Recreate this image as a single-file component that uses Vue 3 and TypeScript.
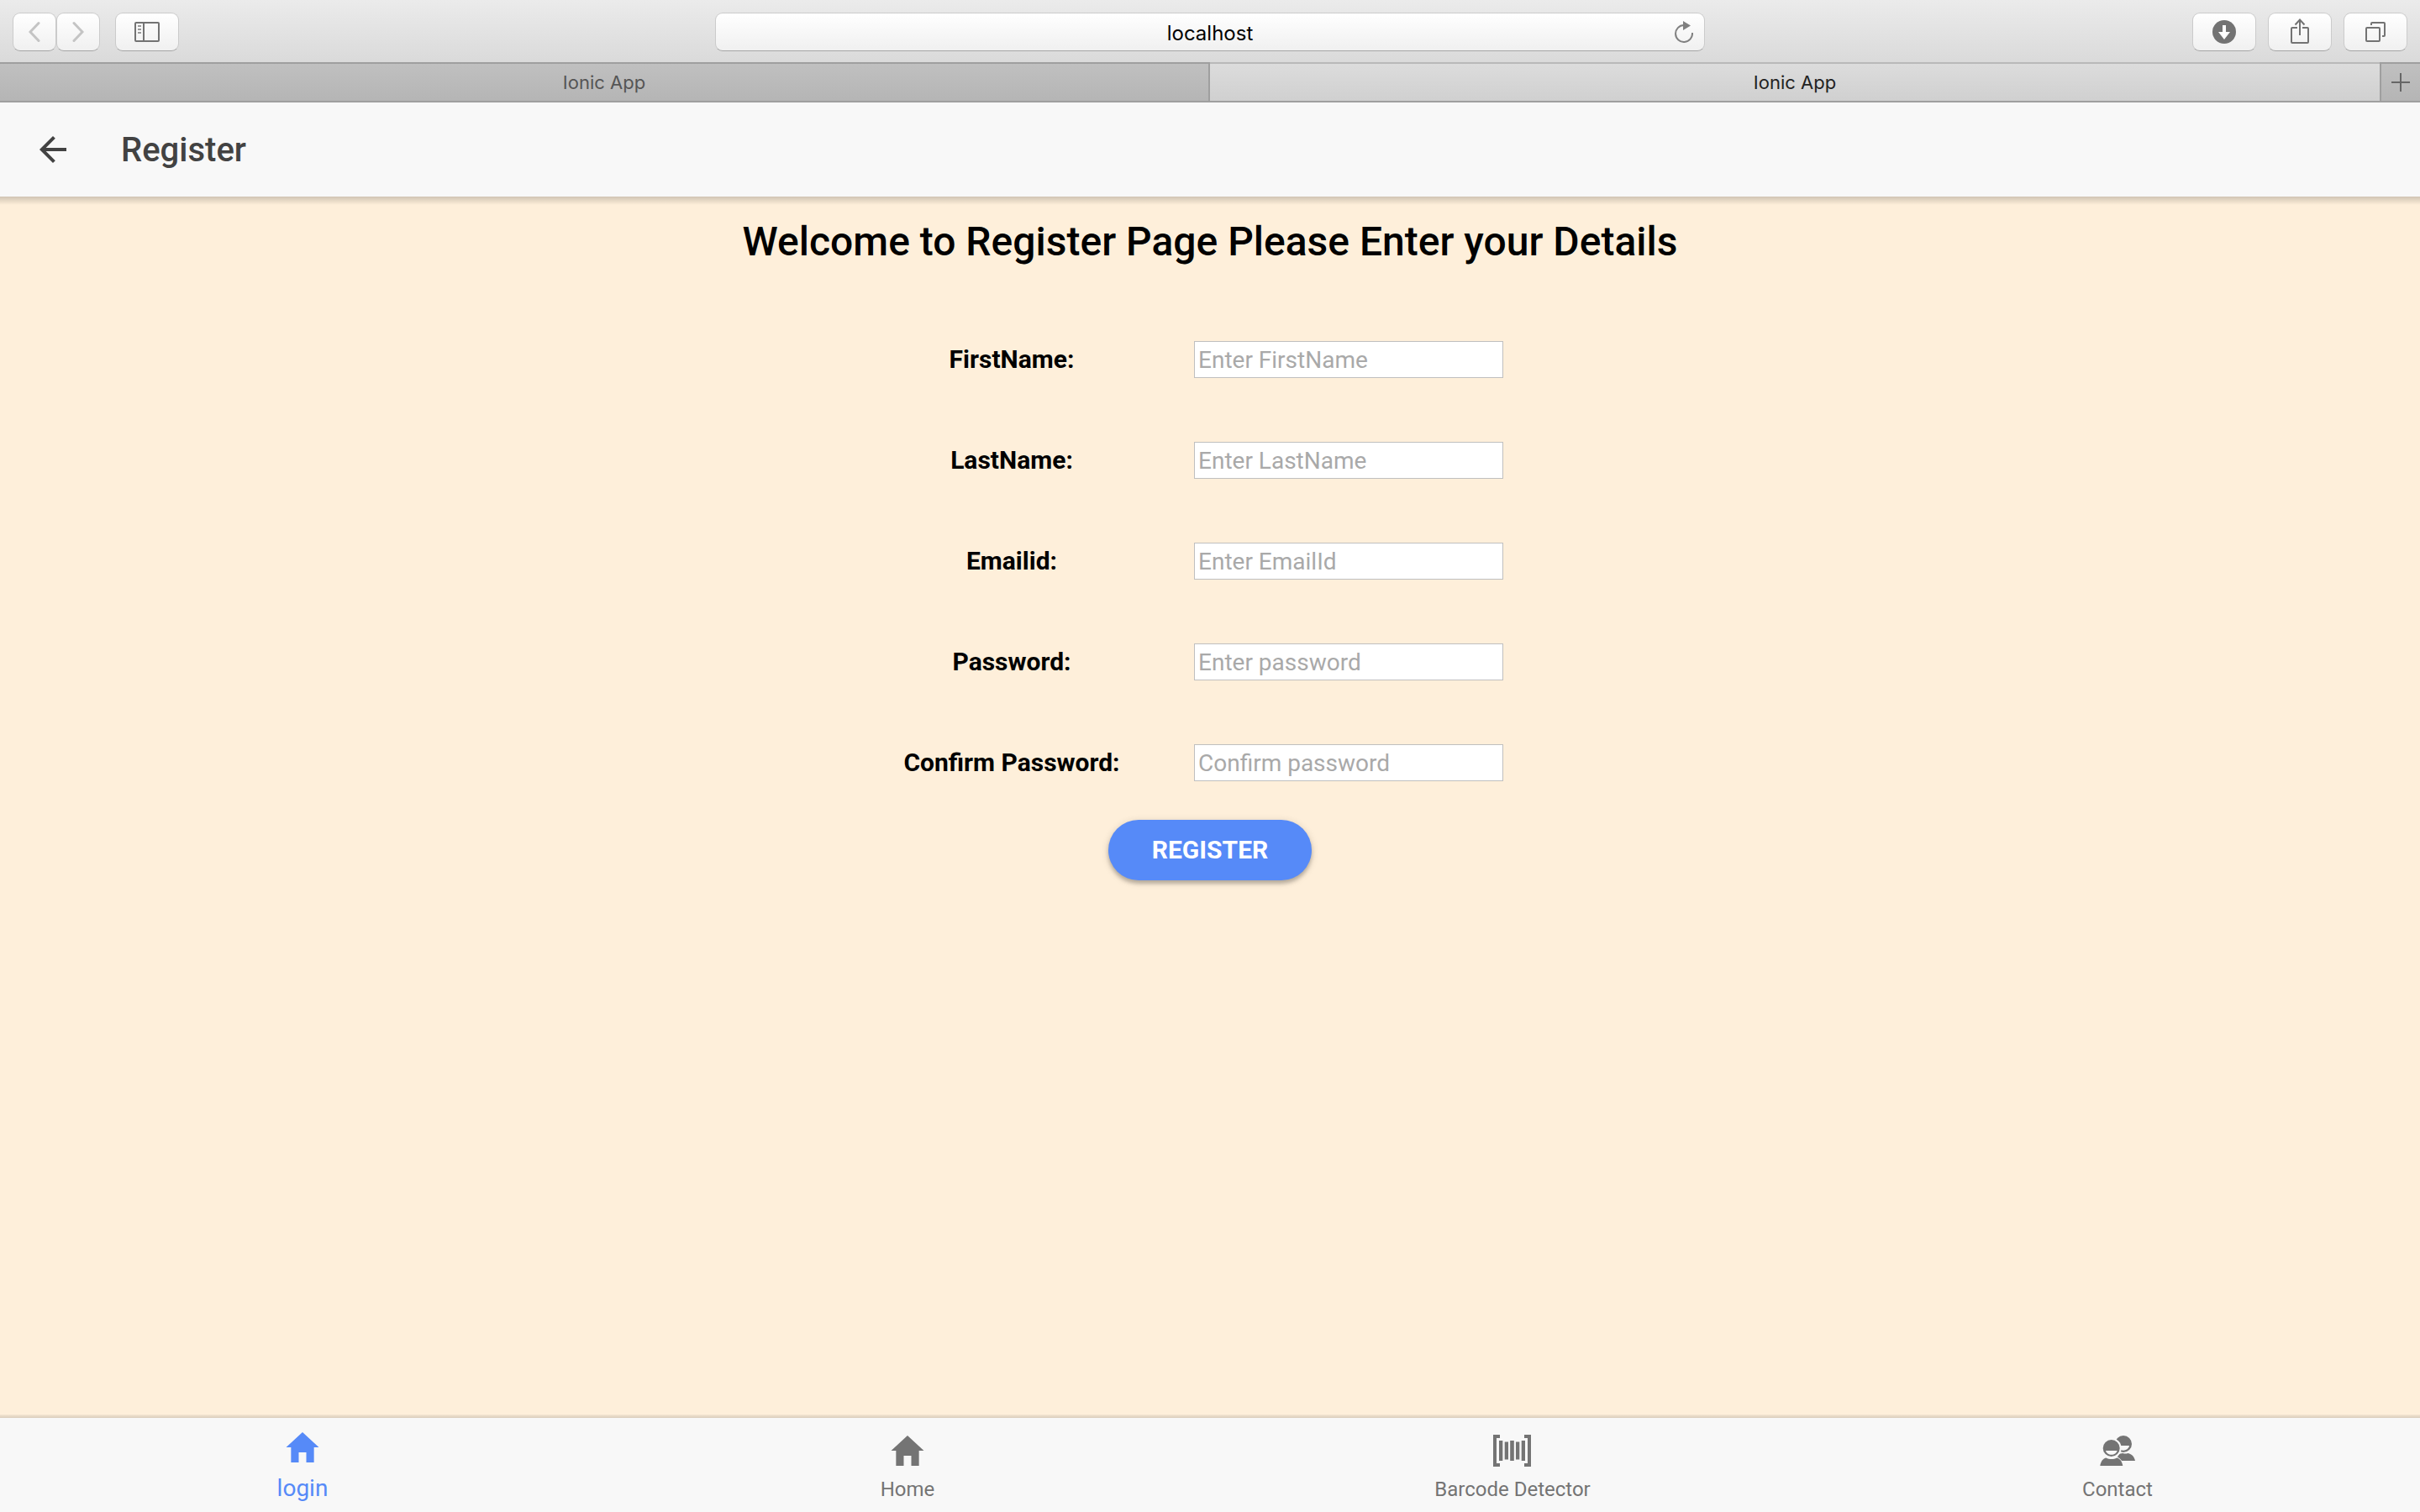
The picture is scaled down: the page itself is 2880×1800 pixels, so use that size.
<script setup lang="ts">
import { ref } from 'vue'

interface Field {
  id: string
  label: string
  placeholder: string
  type: string
}

interface Tab {
  name: string
  icon: 'home' | 'barcode' | 'contact'
}

const fields: Field[] = [
  { id: 'first-name', label: 'FirstName:', placeholder: 'Enter FirstName', type: 'text' },
  { id: 'last-name', label: 'LastName:', placeholder: 'Enter LastName', type: 'text' },
  { id: 'email-id', label: 'Emailid:', placeholder: 'Enter EmailId', type: 'email' },
  { id: 'password', label: 'Password:', placeholder: 'Enter password', type: 'password' },
  { id: 'confirm-password', label: 'Confirm Password:', placeholder: 'Confirm password', type: 'password' },
]

const tabs: Tab[] = [
  { name: 'login', icon: 'home' },
  { name: 'Home', icon: 'home' },
  { name: 'Barcode Detector', icon: 'barcode' },
  { name: 'Contact', icon: 'contact' },
]

const address = ref('localhost')
const activeTab = ref('login')
const values = ref<Record<string, string>>({})
</script>

<template>
  <div class="window">
    <div class="toolbar">
      <div class="tools">
        <div class="history">
          <button class="tool narrow" type="button" aria-label="Back">
            <svg width="14" height="26" viewBox="0 0 14 26" fill="none" stroke="#c4c4c4" stroke-width="3" stroke-linecap="round"><path d="M12 2.500L2 13l10 10.500" /></svg>
          </button>
          <button class="tool narrow" type="button" aria-label="Forward">
            <svg width="14" height="26" viewBox="0 0 14 26" fill="none" stroke="#c4c4c4" stroke-width="3" stroke-linecap="round"><path d="M2 2.500L12 13L2 23.500" /></svg>
          </button>
        </div>
        <button class="tool" type="button" aria-label="Show sidebar">
          <svg width="30" height="24" viewBox="0 0 30 24" fill="none" stroke="#737373" stroke-width="2">
            <rect x="1" y="1" width="28" height="22" rx="1" />
            <path d="M11 1v22" />
            <path d="M4 5h4M4 9h4M4 13h4" stroke="#999" />
          </svg>
        </button>
      </div>

      <div class="address">
        <input v-model="address" type="text" aria-label="Address" />
        <button class="reload" type="button" aria-label="Reload">
          <svg width="22" height="26" viewBox="0 0 22 26">
            <path d="M21 14A10 10 0 1 1 11 5" fill="none" stroke="#808080" stroke-width="2" />
            <path d="M10 0l9 5.500L10 11z" fill="#808080" />
          </svg>
        </button>
      </div>

      <div class="tools end">
        <button class="tool" type="button" aria-label="Downloads">
          <svg width="28" height="28" viewBox="0 0 28 28">
            <circle cx="14" cy="14" r="14" fill="#737373" />
            <path d="M12 6h4v8h5l-7 9-7-9h5z" fill="#fff" />
          </svg>
        </button>
        <button class="tool" type="button" aria-label="Share">
          <svg width="22" height="32" viewBox="0 0 22 32" fill="none" stroke="#737373" stroke-width="2">
            <path d="M8 11H2a1 1 0 0 0-1 1v16a1 1 0 0 0 1 1h18a1 1 0 0 0 1-1V12a1 1 0 0 0-1-1h-6" />
            <path d="M11 20V1.500M5.500 7.500L11 1.500l5.500 6" />
          </svg>
        </button>
        <button class="tool" type="button" aria-label="Show all tabs">
          <svg width="24" height="24" viewBox="0 0 24 24" fill="none" stroke="#737373" stroke-width="2">
            <rect x="1" y="7" width="16" height="16" rx="1" />
            <path d="M7 4V2a1 1 0 0 1 1-1h14a1 1 0 0 1 1 1v14a1 1 0 0 1-1 1h-2" />
          </svg>
        </button>
      </div>
    </div>

    <div class="browser-tabs">
      <button class="browser-tab" type="button">Ionic App</button>
      <button class="browser-tab current" type="button">Ionic App</button>
      <button class="new-tab" type="button" aria-label="New tab">
        <svg width="22" height="22" viewBox="0 0 22 22" stroke="#666" stroke-width="2"><path d="M11 0v22M0 11h22" /></svg>
      </button>
    </div>

    <header class="app-bar">
      <button class="back" type="button" aria-label="Back to previous page">
        <svg width="48" height="48" viewBox="0 0 24 24" fill="#424242"><path d="M20 11H7.830l5.590-5.590L12 4l-8 8 8 8 1.410-1.410L7.830 13H20v-2z" /></svg>
      </button>
      <h1>Register</h1>
    </header>

    <main class="content">
      <h2>Welcome to Register Page Please Enter your Details</h2>
      <form class="form" @submit.prevent>
        <div v-for="field in fields" :key="field.id" class="row">
          <label :for="field.id">{{ field.label }}</label>
          <input :id="field.id" v-model="values[field.id]" :type="field.type" :placeholder="field.placeholder" autocomplete="off" />
        </div>
        <button class="submit" type="submit">REGISTER</button>
      </form>
    </main>

    <nav class="tab-bar">
      <a
        v-for="tab in tabs"
        :key="tab.name"
        href="#"
        class="tab"
        :class="{ active: tab.name === activeTab }"
        @click.prevent="activeTab = tab.name"
      >
        <svg v-if="tab.icon === 'home'" width="48" height="48" viewBox="0 0 512 512" fill="currentColor">
          <path d="M208 448V320h96v128h97.600V256H464L256 64 48 256h62.400v192z" />
        </svg>
        <svg v-else-if="tab.icon === 'barcode'" width="48" height="48" viewBox="0 0 48 48" fill="currentColor">
          <path d="M1 5h8v4H5v30h4v4H1zM46 5h-8v4h4v30h-4v4h8z" />
          <path d="M8 12h4.300v24H8zM14.700 13.500H19v21h-4.300zM21.200 12h4.600v24h-4.600zM28 13.500h4.300v21H28zM34.700 12H39v24h-4.300z" />
        </svg>
        <svg v-else width="48" height="48" viewBox="0 0 48 48" fill="currentColor">
          <circle cx="31" cy="16" r="10" />
          <path d="M24 18.700h14a7 5.500 0 0 1-14 4z" fill="none" />
          <path d="M26 18h12c-.5 3.500-4 5.700-7 5.700-2 0-4-.7-5-1.700z" fill="#f8f8f8" />
          <path d="M23 36c1-5 2-8 4.500-8.500l3-.5c2 .8 4 .6 6 0 4.500 1 7.500 4 8.500 9z" />
          <circle cx="16.700" cy="21" r="12" fill="#f8f8f8" />
          <path d="M4 44c0-7 3-12 8-13h10c5 1 9 6 10 13z" fill="#f8f8f8" />
          <circle cx="16.700" cy="21" r="10" />
          <path d="M10 24h13.600c-.6 3-3.600 4.800-6.800 4.800S10.600 27 10 24z" fill="#f8f8f8" />
          <path d="M3.300 42c.8-5 3-8.500 7-9.600 4 2 9 2 13 0 4 1.100 6.200 4.600 7 9.600z" />
        </svg>
        <span>{{ tab.name }}</span>
      </a>
    </nav>
  </div>
</template>

<style>
body {
  margin: 0;
}
</style>

<style scoped>
.window {
  display: flex;
  flex-direction: column;
  min-height: 100vh;
  font-family: Roboto, sans-serif;
  background: #feefda;
}

* {
  box-sizing: border-box;
}

button,
input {
  margin: 0;
  padding: 0;
  border: 0;
  font-family: inherit;
}

svg {
  display: block;
}

/* Browser chrome */
.toolbar {
  display: grid;
  grid-template-columns: 1fr minmax(0, 1178px) 1fr;
  padding: 15px 15px 13px;
  background: linear-gradient(#ebebeb, #dadada);
  font-family: Inter, sans-serif;
}

.tools {
  display: flex;
  gap: 18px;
}

.tools.end {
  justify-content: flex-end;
  gap: 14px;
}

.history {
  display: flex;
}

.tool,
.address {
  height: 46px;
  border: 1px solid #cbcbcb;
  border-bottom-color: #a5a5a5;
  border-radius: 9px;
  background: linear-gradient(#fff, #f0f0f0);
}

.tool {
  display: flex;
  align-items: center;
  justify-content: center;
  width: 76px;
}

.tool.narrow {
  width: 52px;
}

.address {
  display: grid;
  grid-template-columns: 1fr 48px;
  align-items: center;
  padding-left: 48px;
}

.address input {
  min-width: 0;
  height: 44px;
  padding-top: 2px;
  background: none;
  color: #000;
  font-size: 24px;
  text-align: center;
}

.reload {
  display: flex;
  justify-content: center;
  background: none;
}

.browser-tabs {
  display: grid;
  grid-template-columns: 1440fr 1392fr 48px;
  height: 48px;
}

.browser-tab,
.new-tab {
  border-top: 2px solid #9f9f9f;
  border-bottom: 2px solid #9f9f9f;
  background: linear-gradient(#c0c0c0, #b5b5b5);
}

.browser-tab {
  border-right: 2px solid #9f9f9f;
  color: #555;
  font-family: Inter, sans-serif;
  font-size: 22px;
}

.browser-tab.current {
  border-top-color: #b9b9b9;
  border-right: 0;
  background: linear-gradient(#dcdcdc, #d0d0d0);
  color: #222;
}

.new-tab {
  display: flex;
  align-items: center;
  justify-content: center;
  border-left: 2px solid #9f9f9f;
}

/* App header */
.app-bar {
  display: flex;
  align-items: center;
  gap: 57px;
  height: 112px;
  padding: 0 39px;
  background: #f8f8f8;
}

.back {
  background: none;
}

.app-bar h1 {
  margin: 0;
  padding-top: 2px;
  color: #424242;
  font-size: 40px;
  font-weight: 500;
  line-height: 48px;
}

/* Page */
.content {
  display: flex;
  flex: 1;
  flex-direction: column;
  align-items: center;
  gap: 90px;
  padding: 26px 32px;
  background:
    linear-gradient(rgba(0, 0, 0, 0.18), rgba(0, 0, 0, 0)) top / 100% 10px no-repeat,
    linear-gradient(rgba(0, 0, 0, 0.04), rgba(0, 0, 0, 0.14)) bottom / 100% 4px no-repeat,
    #feefda;
}

.content h2 {
  margin: 0;
  color: #000;
  font-size: 48px;
  font-weight: 500;
  line-height: 56px;
  text-align: center;
}

.form {
  display: flex;
  flex-direction: column;
  align-items: center;
  gap: 76px;
  width: 100%;
  max-width: 802px;
}

.row {
  display: grid;
  grid-template-columns: 330px 1fr;
  align-items: center;
  width: 100%;
}

.row label {
  color: #000;
  font-size: 30px;
  font-weight: 700;
  line-height: 32px;
  text-align: center;
}

.row input {
  justify-self: center;
  width: 368px;
  height: 44px;
  padding: 0 4px;
  border: 1px solid #bfbfbf;
  background: #fff;
  color: #000;
  font-size: 28px;
}

.row input::placeholder {
  color: #a9a9a9;
}

.submit {
  height: 72px;
  margin-top: -30px;
  padding: 0 52px;
  border-radius: 36px;
  background: #568af8;
  box-shadow:
    0 4px 4px rgba(0, 0, 0, 0.2),
    0 2px 10px rgba(0, 0, 0, 0.16);
  color: #fff;
  font-size: 30px;
  font-weight: 700;
  line-height: 32px;
}

/* Bottom navigation */
.tab-bar {
  display: grid;
  grid-template-columns: repeat(4, 1fr);
  height: 112px;
  background: #f8f8f8;
}

.tab {
  display: flex;
  flex-direction: column;
  align-items: center;
  justify-content: flex-end;
  gap: 8px;
  padding-bottom: 13px;
  color: #747474;
  font-size: 24px;
  line-height: 28px;
  text-decoration: none;
}

.tab.active {
  gap: 9px;
  padding-bottom: 12px;
  color: #568af8;
  font-size: 28px;
  line-height: 32px;
}
</style>
